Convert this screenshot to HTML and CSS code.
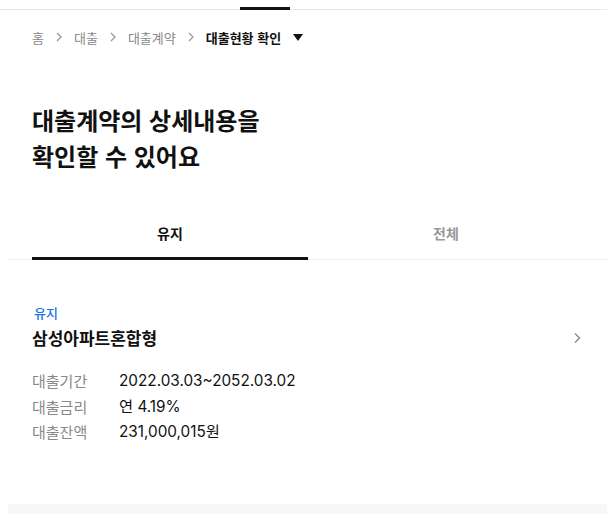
FILE: index.html
```html
<!DOCTYPE html>
<html lang="ko">
<head>
  <meta charset="UTF-8" />
  <title>대출현황 확인</title>
  <link rel="stylesheet" href="styles.css">
</head>
<body>
  <div class="topbar"><span class="topbar-active"></span></div>

  <nav class="crumbs">
    <span>홈</span>
    <span class="sep"><svg width="6" height="10" viewBox="0 0 6 10"><path d="M1 1l4 4-4 4" fill="none" stroke="#999" stroke-width="1.3"/></svg></span>
    <span>대출</span>
    <span class="sep"><svg width="6" height="10" viewBox="0 0 6 10"><path d="M1 1l4 4-4 4" fill="none" stroke="#999" stroke-width="1.3"/></svg></span>
    <span>대출계약</span>
    <span class="sep"><svg width="6" height="10" viewBox="0 0 6 10"><path d="M1 1l4 4-4 4" fill="none" stroke="#999" stroke-width="1.3"/></svg></span>
    <span class="current">대출현황 확인</span>
    <svg class="caret" width="10" height="7" viewBox="0 0 10 7"><path d="M0 0h10L5 7z" fill="#111"/></svg>
  </nav>

  <h1 class="title">대출계약의 상세내용을<br>확인할 수 있어요</h1>

  <div class="tabs">
    <div class="tab active">유지</div>
    <div class="tab">전체</div>
  </div>

  <section class="loan">
    <div class="badge">유지</div>
    <div class="loan-head">
      <span class="loan-name">삼성아파트혼합형</span>
      <svg width="8" height="12" viewBox="0 0 8 12"><path d="M2 1.5l4.5 4.5L2 10.5" fill="none" stroke="#8a8f98" stroke-width="1.5"/></svg>
    </div>
    <dl class="info">
      <div class="row"><dt>대출기간</dt><dd>2022.03.03~2052.03.02</dd></div>
      <div class="row"><dt>대출금리</dt><dd>연 4.19%</dd></div>
      <div class="row"><dt>대출잔액</dt><dd>231,000,015원</dd></div>
    </dl>
  </section>

  <div class="bottom-band"></div>
</body>
</html>
```

FILE: styles.css
```css
body {
  margin: 0;
  font-family: "Noto Sans CJK KR", "Noto Sans", sans-serif;
  color: #111;
  background: #fff;
  height: 514px;
  overflow: hidden;
}
.topbar {
  height: 9px;
  border-bottom: 1px solid #e8e8e8;
  position: relative;
}
.topbar-active {
  position: absolute;
  left: 240px;
  bottom: -1px;
  width: 50px;
  height: 3px;
  background: #111;
}
.crumbs {
  display: flex;
  align-items: center;
  padding: 16px 0 0 32px;
  height: 22px;
  font-size: 13px;
  color: #888;
}
.crumbs .sep {
  display: flex;
  margin: 0 12px;
}
.crumbs .current {
  color: #111;
  font-weight: 700;
}
.crumbs .caret {
  margin-left: 12px;
}
.title {
  margin: 54px 0 0 32px;
  font-size: 24px;
  line-height: 36px;
  font-weight: 700;
}
.tabs {
  display: flex;
  margin: 49px 0 0 8px;
  padding-left: 24px;
  border-bottom: 1px solid #f0f0f0;
}
.tab {
  width: 276px;
  text-align: center;
  font-size: 14px;
  font-weight: 700;
  color: #999;
  height: 36px;
  line-height: 20px;
  box-sizing: border-box;
}
.tab.active {
  color: #111;
  border-bottom: 3px solid #111;
  margin-bottom: -1px;
  height: 37px;
}
.loan {
  padding: 44px 26px 0 32px;
}
.badge {
  font-size: 13px;
  color: #1a73e8;
  font-weight: 500;
  padding-left: 2px;
  line-height: 18px;
}
.loan-head {
  display: flex;
  justify-content: space-between;
  align-items: center;
  margin-top: 4px;
}
.loan-name {
  font-size: 17px;
  font-weight: 700;
  line-height: 24px;
}
.info {
  margin: 18px 0 0;
}
.row {
  display: flex;
  font-size: 15px;
  line-height: 25.5px;
}
.row dt {
  width: 87px;
  color: #888;
}
.row dd {
  margin: 0;
  color: #111;
  font-family: "Inter", "Noto Sans CJK KR", sans-serif;
  font-size: 15.3px;
}
.bottom-band {
  margin: 59px 0 0 8px;
  height: 20px;
  background: #f6f7f9;
}
```
